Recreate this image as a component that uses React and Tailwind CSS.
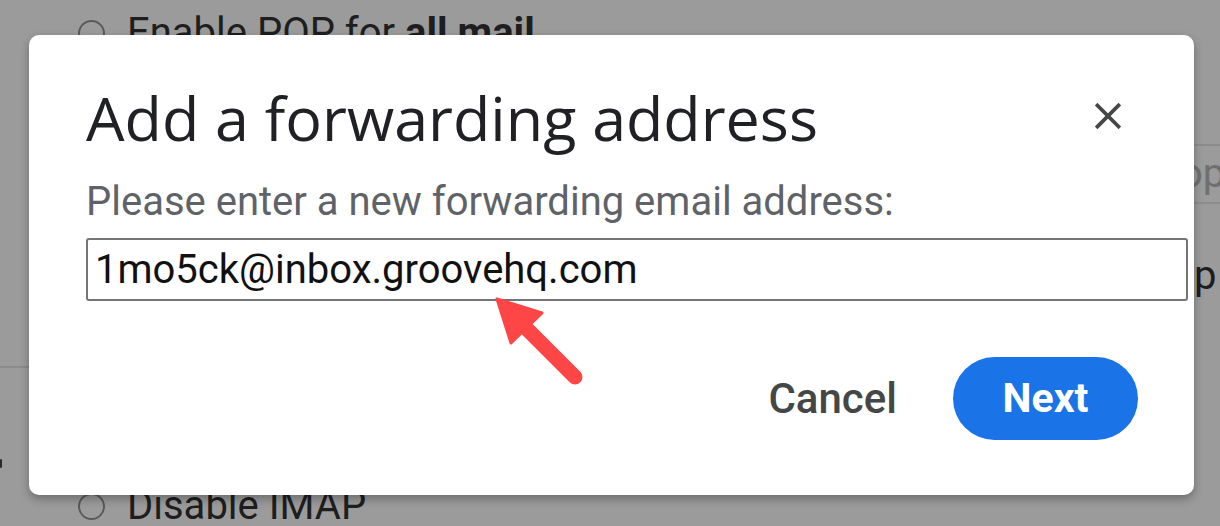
import React from 'react'

const Radio = () => (
  <span className="inline-block h-[27px] w-[27px] shrink-0 rounded-full border-2 border-[#5a5a5a]"></span>
)

export default function App() {
  return (
    <div
      className="relative h-[526px] w-[1220px] overflow-hidden bg-[#9b9b9c]"
      style={{ fontFamily: 'Roboto, "Liberation Sans", sans-serif' }}
    >
      {/* page behind the scrim */}
      <div className="flex h-full flex-col">
        <div className="flex items-center gap-[22px] pl-[78px] pt-[10px] text-[40px] leading-[46px] text-[#1e1e1f]">
          <Radio />
          <span>
            Enable POP for <b className="font-bold">all mail</b>
          </span>
        </div>
        <div className="flex flex-1 justify-end">
          <div className="flex w-[26px] flex-col">
            <div className="mt-[88px] h-[60px] whitespace-nowrap border-y-2 border-[#8c8c8c] text-[40px] leading-[56px] text-[#6f6f70]">
              <span className="-ml-[14px]">op</span>
            </div>
            <div className="mt-[46px] text-[40px] leading-[52px] text-[#1e1e1f]">p</div>
          </div>
        </div>
        <div className="flex items-center gap-[22px] pl-[78px] text-[40px] leading-[40px] text-[#1e1e1f]">
          <Radio />
          <span>Disable IMAP</span>
        </div>
      </div>
      <div className="absolute left-0 top-[366px] h-[2px] w-[30px] bg-[#8c8c8c]"></div>
      <div className="absolute left-0 top-[459px] h-[9px] w-[2px] rounded-full bg-[#2a2a2a]"></div>

      {/* dialog */}
      <div className="absolute left-[29px] top-[35px] flex h-[460px] w-[1165px] flex-col rounded-[10px] bg-white pl-[57px] pr-[6px] shadow-[0_4px_10px_rgba(0,0,0,0.3)]">
        <div className="flex items-start justify-between pt-[48px]">
          <h1
            className="text-[61px] leading-[70px] font-normal text-[#202124]"
            style={{ fontFamily: '"Open Sans", Roboto, sans-serif' }}
          >
            Add a forwarding address
          </h1>
          <button type="button" aria-label="Close" className="mr-[62px] mt-[15px] text-[#444746]">
            <svg width="36" height="36" viewBox="0 0 24 24" fill="none" stroke="currentColor" strokeWidth="2.5" strokeLinecap="square">
              <path d="M5 5 19 19M19 5 5 19" />
            </svg>
          </button>
        </div>
        <p className="mt-[26px] text-[40px] leading-[46px] text-[#5f6368]">Please enter a new forwarding email address:</p>
        <div className="mt-[13px] flex h-[63px] items-center rounded-[3px] border-2 border-[#757575] pl-[7px] text-[40px] text-[#111]">
          1mo5ck@inbox.groovehq.com
        </div>
        <div className="mt-[56px] flex items-center justify-end gap-[56px] pr-[50px]">
          <button type="button" className="text-[42px] font-medium text-[#444746]">Cancel</button>
          <button type="button" className="flex h-[83px] w-[185px] items-center justify-center rounded-full bg-[#1b73e8] text-[41px] font-bold text-white">
            Next
          </button>
        </div>
      </div>

      {/* red annotation arrow */}
      <svg className="absolute left-0 top-0" width="1220" height="526" viewBox="0 0 1220 526">
        <path d="M575 377 516 318" stroke="#fe4646" strokeWidth="15" strokeLinecap="round" />
        <path d="M497 299 542 313 511 343Z" fill="#fe4646" stroke="#fe4646" strokeWidth="3" strokeLinejoin="round" />
      </svg>
    </div>
  )
}
